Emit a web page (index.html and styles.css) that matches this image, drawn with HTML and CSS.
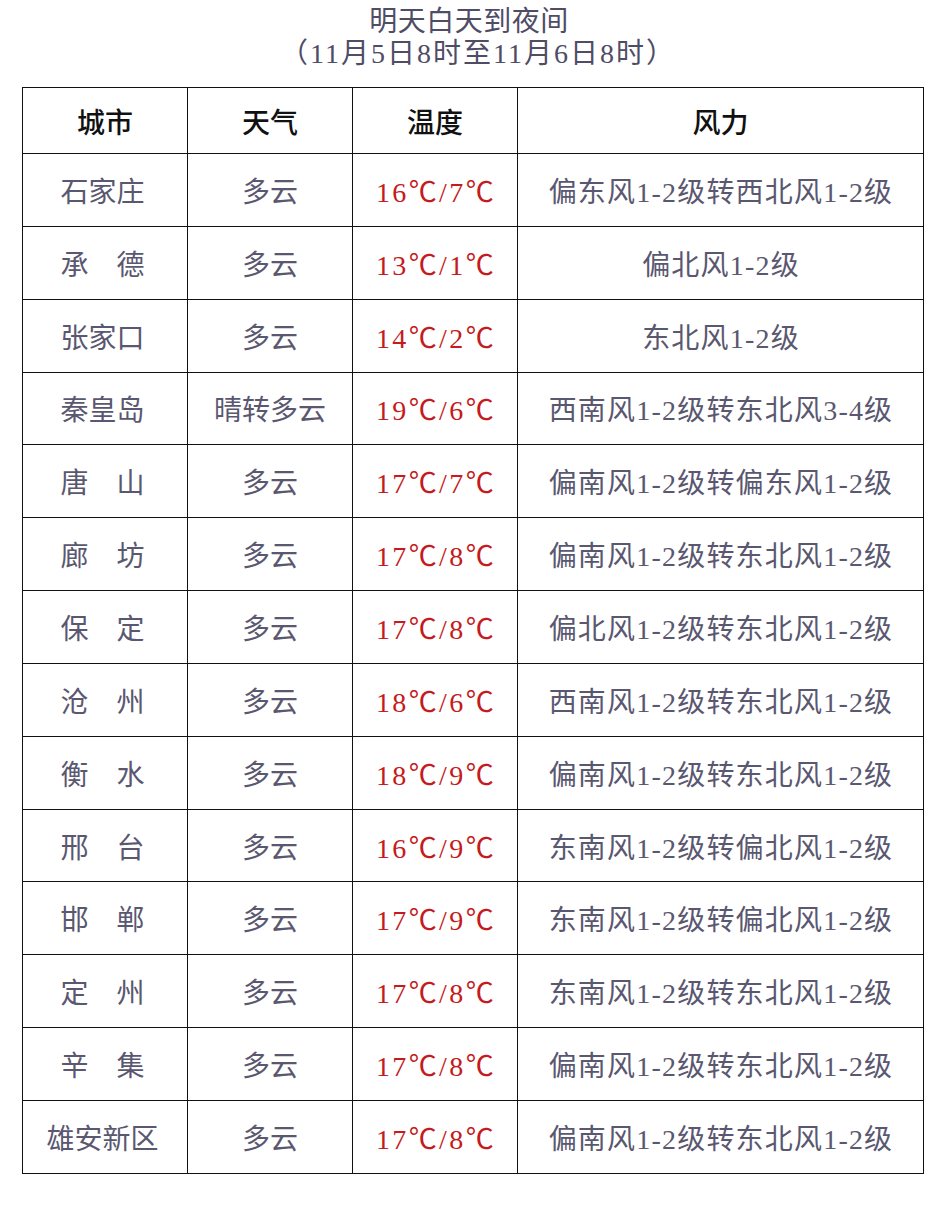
FILE: index.html
```html
<!DOCTYPE html>
<html lang="zh-CN">
<head>
<meta charset="utf-8">
<title>明天白天到夜间</title>
<link rel="stylesheet" href="styles.css">
</head>
<body>
<div class="page">
  <div class="title">
    <div class="t1">明天白天到夜间</div>
    <div class="t2">（11月5日8时至11月6日8时）</div>
  </div>
  <table class="wx">
    <colgroup>
      <col class="c1"><col class="c2"><col class="c3"><col class="c4">
    </colgroup>
    <thead>
      <tr><th>城市</th><th>天气</th><th>温度</th><th>风力</th></tr>
    </thead>
    <tbody>
      <tr><td class="city">石家庄</td><td>多云</td><td class="temp">16℃/7℃</td><td class="wind">偏东风1-2级转西北风1-2级</td></tr>
      <tr><td class="city">承　德</td><td>多云</td><td class="temp">13℃/1℃</td><td class="wind">偏北风1-2级</td></tr>
      <tr><td class="city">张家口</td><td>多云</td><td class="temp">14℃/2℃</td><td class="wind">东北风1-2级</td></tr>
      <tr><td class="city">秦皇岛</td><td>晴转多云</td><td class="temp">19℃/6℃</td><td class="wind">西南风1-2级转东北风3-4级</td></tr>
      <tr><td class="city">唐　山</td><td>多云</td><td class="temp">17℃/7℃</td><td class="wind">偏南风1-2级转偏东风1-2级</td></tr>
      <tr><td class="city">廊　坊</td><td>多云</td><td class="temp">17℃/8℃</td><td class="wind">偏南风1-2级转东北风1-2级</td></tr>
      <tr><td class="city">保　定</td><td>多云</td><td class="temp">17℃/8℃</td><td class="wind">偏北风1-2级转东北风1-2级</td></tr>
      <tr><td class="city">沧　州</td><td>多云</td><td class="temp">18℃/6℃</td><td class="wind">西南风1-2级转东北风1-2级</td></tr>
      <tr><td class="city">衡　水</td><td>多云</td><td class="temp">18℃/9℃</td><td class="wind">偏南风1-2级转东北风1-2级</td></tr>
      <tr><td class="city">邢　台</td><td>多云</td><td class="temp">16℃/9℃</td><td class="wind">东南风1-2级转偏北风1-2级</td></tr>
      <tr><td class="city">邯　郸</td><td>多云</td><td class="temp">17℃/9℃</td><td class="wind">东南风1-2级转偏北风1-2级</td></tr>
      <tr><td class="city">定　州</td><td>多云</td><td class="temp">17℃/8℃</td><td class="wind">东南风1-2级转东北风1-2级</td></tr>
      <tr><td class="city">辛　集</td><td>多云</td><td class="temp">17℃/8℃</td><td class="wind">偏南风1-2级转东北风1-2级</td></tr>
      <tr><td class="city">雄安新区</td><td>多云</td><td class="temp">17℃/8℃</td><td class="wind">偏南风1-2级转东北风1-2级</td></tr>
    </tbody>
  </table>
</div>
</body>
</html>
```

FILE: styles.css
```css
html, body {
  margin: 0;
  padding: 0;
  background: #ffffff;
}
body {
  font-family: "Liberation Serif", "Noto Sans CJK SC", serif;
  color: #55536a;
}
.page {
  width: 942px;
  padding-top: 6px;
}
.title {
  text-align: center;
  color: #4f4c66;
  font-size: 28px;
  line-height: 32px;
}
.t1 {
  padding-right: 4px;
  letter-spacing: 0.5px;
}
.t2 {
  padding-left: 14px;
  letter-spacing: 2px;
}
.wx {
  margin: 17px 0 0 22px;
  width: 901px;
  border-collapse: collapse;
  table-layout: fixed;
}
.c1, .c2, .c3 { width: 165px; }
.c4 { width: 406px; }
.wx th, .wx td {
  border: 1.5px solid #111111;
  text-align: center;
  vertical-align: middle;
  padding: 0;
  font-size: 28px;
}
.wx th {
  height: 65px;
  color: #111111;
  font-weight: 500;
}
.wx td {
  height: 71.85px;
  color: #5a5770;
}
.wx td.city {
  padding-right: 5px;
}
.wx td.temp {
  color: #c41a20;
  letter-spacing: 2.4px;
  padding-left: 2px;
}
.wx td.wind {
  letter-spacing: 1.2px;
  padding-left: 1px;
}
```
